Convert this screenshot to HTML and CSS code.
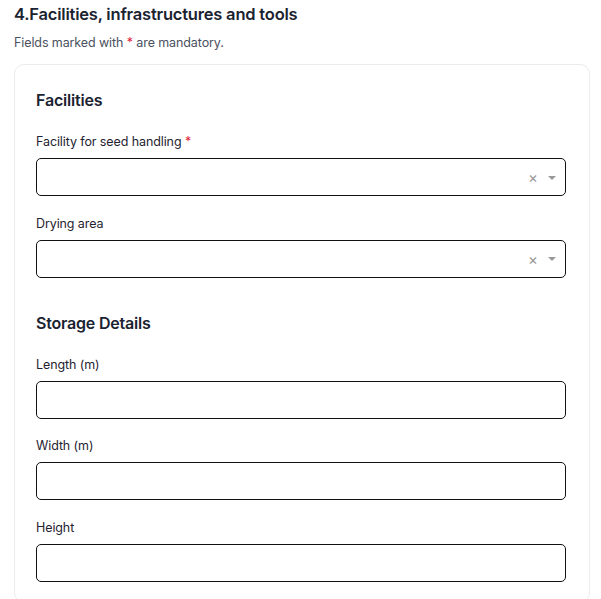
FILE: index.html
```html
<!DOCTYPE html>
<html>
<head>
<meta charset="utf-8">
<link rel="stylesheet" href="styles.css">
</head>
<body>
<div class="page">
  <h1 class="title">4.Facilities, infrastructures and tools</h1>
  <p class="note">Fields marked with <span class="req">*</span> are mandatory.</p>
  <div class="card">
    <h2 class="section">Facilities</h2>
    <div class="field">
      <label class="label">Facility for seed handling <span class="req">*</span></label>
      <div class="select">
        <span class="clear">×</span>
        <span class="caret"></span>
      </div>
    </div>
    <div class="field">
      <label class="label">Drying area</label>
      <div class="select">
        <span class="clear">×</span>
        <span class="caret"></span>
      </div>
    </div>
    <h2 class="section section-gap">Storage Details</h2>
    <div class="field">
      <label class="label">Length (m)</label>
      <input class="input" type="text">
    </div>
    <div class="field">
      <label class="label">Width (m)</label>
      <input class="input" type="text">
    </div>
    <div class="field">
      <label class="label">Height</label>
      <input class="input" type="text">
    </div>
  </div>
</div>
</body>
</html>
```
FILE: styles.css
```css
* { box-sizing: border-box; }
html, body { margin: 0; padding: 0; background: #fff; }
body {
  font-family: Inter, "Noto Sans", "Liberation Sans", sans-serif;
  color: #1b2230;
}
.page {
  padding: 3px 11px 0 14px;
}
.title {
  margin: 0;
  font-size: 16.5px;
  line-height: 22px;
  font-weight: 600;
  letter-spacing: -0.2px;
  color: #1b2230;
}
.note {
  margin: 10px 0 0;
  font-size: 12.5px;
  line-height: 16px;
  color: #4b5160;
  letter-spacing: -0.1px;
}
.req { color: #e0203a; }
.card {
  margin-top: 13px;
  border: 1px solid #ececec;
  border-radius: 10px;
  padding: 24px 22px 20px 21px;
}
.section {
  margin: 0 0 22px;
  font-size: 16px;
  line-height: 22px;
  font-weight: 600;
  letter-spacing: -0.2px;
  color: #1b2230;
}
.section-gap { margin-top: 34px; }
.field { display: flex; flex-direction: column; }
.field + .field { margin-top: 18.5px; }
.label {
  font-size: 12.5px;
  line-height: 17px;
  color: #1f2430;
  letter-spacing: -0.1px;
  margin-bottom: 8px;
}
.select, .input {
  height: 38px;
  width: 530px;
  border: 1px solid #111;
  border-radius: 5px;
  background: #fff;
}
.input { display: block; font: inherit; padding: 0 10px; }
.select {
  display: flex;
  align-items: center;
  justify-content: flex-end;
  padding-right: 9px;
  gap: 10px;
}
.clear {
  font-size: 15px;
  line-height: 1;
  color: #999;
  margin-top: 1px;
}
.caret {
  width: 0;
  height: 0;
  border-left: 4px solid transparent;
  border-right: 4px solid transparent;
  border-top: 4px solid #999;
  margin-top: 1px;
}
```
